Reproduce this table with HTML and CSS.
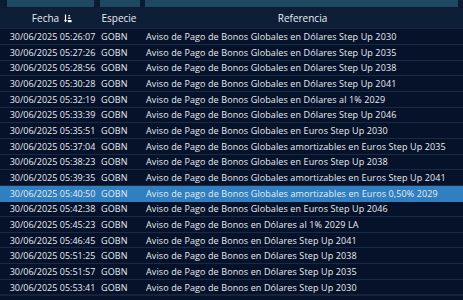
FILE: index.html
```html
<!DOCTYPE html>
<html lang="es">
<head>
<meta charset="utf-8">
<link rel="stylesheet" href="styles.css">
</head>
<body>
<div class="grid">
  <div class="filters">
    <div class="f f1"></div>
    <div class="f f2"></div>
    <div class="f f3"></div>
  </div>
  <div class="head">
    <div class="hc c1">Fecha
      <svg class="sort" width="8" height="9" viewBox="0 0 8 9"><path d="M1.5 0.5V7.5" stroke="#fff" stroke-width="1.2"/><path d="M0 6L1.5 8.5L3 6Z" fill="#fff"/><rect x="4.5" y="1" width="1.5" height="1.3" fill="#fff"/><rect x="4" y="3.5" width="2.5" height="1.3" fill="#fff"/><rect x="3.8" y="6" width="3.8" height="2.2" fill="#fff"/></svg>
    </div>
    <div class="hc c2">Especie</div>
    <div class="hc c3">Referencia</div>
  </div>
  <div class="rows">
    <div class="row"><span class="c1">30/06/2025 05:26:07</span><span class="c2">GOBN</span><span class="c3">Aviso de Pago de Bonos Globales en Dólares Step Up 2030</span></div>
    <div class="row"><span class="c1">30/06/2025 05:27:26</span><span class="c2">GOBN</span><span class="c3">Aviso de Pago de Bonos Globales en Dólares Step Up 2035</span></div>
    <div class="row"><span class="c1">30/06/2025 05:28:56</span><span class="c2">GOBN</span><span class="c3">Aviso de Pago de Bonos Globales en Dólares Step Up 2038</span></div>
    <div class="row"><span class="c1">30/06/2025 05:30:28</span><span class="c2">GOBN</span><span class="c3">Aviso de Pago de Bonos Globales en Dólares Step Up 2041</span></div>
    <div class="row"><span class="c1">30/06/2025 05:32:19</span><span class="c2">GOBN</span><span class="c3">Aviso de Pago de Bonos Globales en Dólares al 1% 2029</span></div>
    <div class="row"><span class="c1">30/06/2025 05:33:39</span><span class="c2">GOBN</span><span class="c3">Aviso de Pago de Bonos Globales en Dólares Step Up 2046</span></div>
    <div class="row"><span class="c1">30/06/2025 05:35:51</span><span class="c2">GOBN</span><span class="c3">Aviso de Pago de Bonos Globales en Euros Step Up 2030</span></div>
    <div class="row"><span class="c1">30/06/2025 05:37:04</span><span class="c2">GOBN</span><span class="c3">Aviso de Pago de Bonos Globales amortizables en Euros Step Up 2035</span></div>
    <div class="row"><span class="c1">30/06/2025 05:38:23</span><span class="c2">GOBN</span><span class="c3">Aviso de Pago de Bonos Globales en Euros Step Up 2038</span></div>
    <div class="row"><span class="c1">30/06/2025 05:39:35</span><span class="c2">GOBN</span><span class="c3">Aviso de Pago de Bonos Globales amortizables en Euros Step Up 2041</span></div>
    <div class="row sel"><span class="c1">30/06/2025 05:40:50</span><span class="c2">GOBN</span><span class="c3">Aviso de pago de Bonos Globales amortizables en Euros 0,50% 2029</span></div>
    <div class="row"><span class="c1">30/06/2025 05:42:38</span><span class="c2">GOBN</span><span class="c3">Aviso de Pago de Bonos Globales en Euros Step Up 2046</span></div>
    <div class="row"><span class="c1">30/06/2025 05:45:23</span><span class="c2">GOBN</span><span class="c3">Aviso de Pago de Bonos en Dólares al 1% 2029 LA</span></div>
    <div class="row"><span class="c1">30/06/2025 05:46:45</span><span class="c2">GOBN</span><span class="c3">Aviso de Pago de Bonos en Dólares Step Up 2041</span></div>
    <div class="row"><span class="c1">30/06/2025 05:51:25</span><span class="c2">GOBN</span><span class="c3">Aviso de Pago de Bonos en Dólares Step Up 2038</span></div>
    <div class="row"><span class="c1">30/06/2025 05:51:57</span><span class="c2">GOBN</span><span class="c3">Aviso de Pago de Bonos en Dólares Step Up 2035</span></div>
    <div class="row"><span class="c1">30/06/2025 05:53:41</span><span class="c2">GOBN</span><span class="c3">Aviso de Pago de Bonos en Dólares Step Up 2030</span></div>
  </div>
</div>
</body>
</html>
```
FILE: styles.css
```css
html, body {
  margin: 0;
  padding: 0;
  background: #061229;
  overflow: hidden;
}
.grid {
  width: 463px;
  height: 300px;
  background: #061229;
  font-family: "Open Sans", "Noto Sans", sans-serif;
  color: #e8edf3;
  font-size: 9px;
}
.filters {
  display: grid;
  grid-template-columns: 96px 46px 1fr;
  height: 8px;
  background: #0c1b33;
}
.f {
  background: #1d4a60;
  height: 7px;
}
.f1 { margin-left: 7px; margin-right: 2px; }
.f2 { margin-left: 4px; margin-right: 2px; }
.f3 { margin-left: 3px; margin-right: 5px; }
.head {
  display: grid;
  grid-template-columns: 96px 46px 1fr;
  height: 20.3px;
  background: #0e1e37;
  border-bottom: 1px solid #172741;
  align-items: center;
}
.hc {
  text-align: center;
  font-size: 10px;
  color: #e8edf3;
}
.head .c1 { padding-left: 8px; display: flex; justify-content: center; align-items: center; gap: 5px; }
.sort { display: block; }
.row {
  display: grid;
  grid-template-columns: 96px 46px 1fr;
  height: 14.67px;
  border-bottom: 1px solid #1a2a42;
  align-items: center;
  white-space: nowrap;
}
.row .c1 { text-align: center; padding-left: 9px; }
.row .c2 { padding-left: 5px; letter-spacing: 0.1px; }
.row .c3 { padding-left: 4px; letter-spacing: 0.11px; }
.row.sel { background: #2f7fc1; border-bottom-color: #2f7fc1; }
.row:last-child { border-bottom: 2px solid #15243c; }
```
